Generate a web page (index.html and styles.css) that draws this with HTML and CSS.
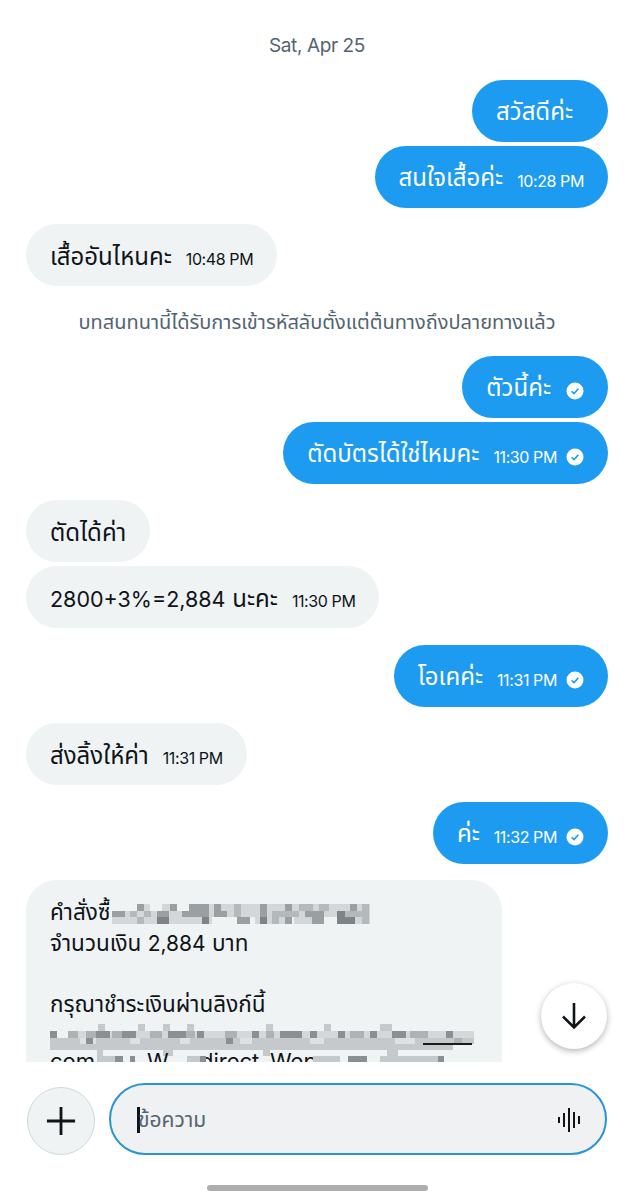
FILE: index.html
```html
<!DOCTYPE html>
<html lang="th">
<head>
    <meta charset="UTF-8">
    <meta name="viewport" content="width=device-width, initial-scale=1.0">
    <title>Chat</title>
    <link rel="stylesheet" href="styles.css">
</head>
<body>
    <div class="thread">
        <p class="date">Sat, Apr 25</p>

        <div class="group sent">
            <div class="bubble bubble-slot"><span class="text">สวัสดีค่ะ</span></div>
            <div class="bubble"><span class="text">สนใจเสื้อค่ะ</span><span class="time">10:28 PM</span></div>
        </div>

        <div class="group received">
            <div class="bubble"><span class="text">เสื้ออันไหนคะ</span><span class="time">10:48 PM</span></div>
        </div>

        <p class="notice">บทสนทนานี้ได้รับการเข้ารหัสลับตั้งแต่ต้นทางถึงปลายทางแล้ว</p>

        <div class="group sent">
            <div class="bubble"><span class="text">ตัวนี้ค่ะ</span><svg class="tick" viewBox="0 0 18 18"><circle cx="9" cy="9" r="8.5" fill="#fff"/><path d="M5.6 9.2l2.4 2.4 4.4-4.8" fill="none" stroke="#1d9bf0" stroke-width="1.6"/></svg></div>
            <div class="bubble"><span class="text">ตัดบัตรได้ใช่ไหมคะ</span><span class="time">11:30 PM</span><svg class="tick" viewBox="0 0 18 18"><circle cx="9" cy="9" r="8.5" fill="#fff"/><path d="M5.6 9.2l2.4 2.4 4.4-4.8" fill="none" stroke="#1d9bf0" stroke-width="1.6"/></svg></div>
        </div>

        <div class="group received">
            <div class="bubble"><span class="text">ตัดได้ค่า</span></div>
            <div class="bubble"><span class="text"><span class="digits">2800+3%=2,884</span> นะคะ</span><span class="time">11:30 PM</span></div>
        </div>

        <div class="group sent">
            <div class="bubble"><span class="text">โอเคค่ะ</span><span class="time">11:31 PM</span><svg class="tick" viewBox="0 0 18 18"><circle cx="9" cy="9" r="8.5" fill="#fff"/><path d="M5.6 9.2l2.4 2.4 4.4-4.8" fill="none" stroke="#1d9bf0" stroke-width="1.6"/></svg></div>
        </div>

        <div class="group received">
            <div class="bubble"><span class="text">ส่งลิ้งให้ค่า</span><span class="time">11:31 PM</span></div>
        </div>

        <div class="group sent">
            <div class="bubble"><span class="text">ค่ะ</span><span class="time">11:32 PM</span><svg class="tick" viewBox="0 0 18 18"><circle cx="9" cy="9" r="8.5" fill="#fff"/><path d="M5.6 9.2l2.4 2.4 4.4-4.8" fill="none" stroke="#1d9bf0" stroke-width="1.6"/></svg></div>
        </div>

        <div class="card">
            <!-- order number is pixelated in the screenshot -->
            <div class="line">คำสั่งซื้<svg class="mosaic-order" viewBox="0 0 260 20" shape-rendering="crispEdges">
                    <rect width="258" height="20" fill="#d3d7d9"/>
                    <g fill="#eff3f4"><rect width="25" height="7"/><rect x="38" width="12" height="7"/><rect x="65" width="12" height="7"/><rect x="100" y="13" width="25" height="7"/><rect x="128" y="13" width="15" height="7"/><rect x="175" y="13" width="7" height="7"/><rect x="200" y="13" width="25" height="7"/></g>
                    <g fill="#9a9fa2"><rect x="25" width="7" height="7"/><rect x="58" width="7" height="7"/><rect x="77" width="20" height="7"/><rect x="102" width="7" height="7"/><rect x="148" width="7" height="7"/><rect x="173" width="7" height="7"/><rect x="238" width="7" height="7"/><rect y="7" width="13" height="6"/><rect x="45" y="7" width="12" height="6"/><rect x="70" y="7" width="20" height="6"/><rect x="90" y="7" width="7" height="6"/><rect x="102" y="7" width="13" height="6"/><rect x="148" y="7" width="7" height="6"/><rect x="193" y="7" width="7" height="6"/><rect x="200" y="7" width="12" height="6"/><rect x="125" y="13" width="13" height="7"/><rect x="173" y="13" width="7" height="7"/><rect x="200" y="13" width="12" height="7"/></g>
                    <g fill="#7e8386"><rect x="45" y="13" width="12" height="7"/><rect x="90" y="13" width="7" height="7"/><rect x="148" y="13" width="7" height="7"/><rect x="225" y="13" width="18" height="7"/><rect x="225" y="7" width="8" height="6"/></g>
                    <g fill="#b4b9bb"><rect x="122" width="7" height="7"/><rect x="187" width="14" height="7"/><rect x="207" width="10" height="7"/><rect x="250" width="7" height="7"/><rect x="18" y="7" width="7" height="6"/><rect x="32" y="7" width="7" height="6"/><rect x="122" y="7" width="7" height="6"/><rect x="160" y="7" width="27" height="6"/><rect x="233" y="7" width="24" height="6"/><rect x="25" y="13" width="7" height="7"/><rect x="160" y="13" width="7" height="7"/><rect x="250" y="13" width="7" height="7"/></g>
                </svg></div>
            <div class="line">จำนวนเงิน <span class="digits">2,884</span> บาท</div>
            <div class="line"></div>
            <div class="line">กรุณาชำระเงินผ่านลิงก์นี้</div>
            <!-- payment link is pixelated too, last line is cut by the composer -->
            <svg class="mosaic-link" viewBox="0 0 424 46" shape-rendering="crispEdges">
                <rect x="22" y="11" width="402" height="7" fill="#d5d8da"/>
                <g fill="#c5c9cb"><rect y="18" width="424" height="6"/><rect y="24" width="403" height="6"/><rect x="48" y="4" width="7" height="7"/><rect x="88" y="4" width="7" height="7"/><rect x="113" y="4" width="7" height="7"/><rect x="137" y="4" width="7" height="7"/><rect x="216" y="4" width="7" height="7"/><rect x="274" y="4" width="7" height="7"/><rect x="330" y="4" width="12" height="7"/><rect x="47" y="30" width="6" height="6"/><rect x="113" y="30" width="10" height="6"/><rect x="213" y="30" width="7" height="6"/><rect x="337" y="30" width="11" height="6"/></g>
                <g fill="#dde1e3"><rect x="30" y="18" width="16" height="6"/><rect x="80" y="18" width="10" height="6"/><rect x="130" y="18" width="10" height="6"/><rect x="190" y="18" width="12" height="6"/><rect x="260" y="18" width="14" height="6"/><rect x="345" y="18" width="20" height="6"/></g>
                <g fill="#aeb2b5"><rect x="18" y="11" width="10" height="7"/><rect x="36" y="11" width="10" height="7"/><rect x="62" y="11" width="10" height="7"/><rect x="100" y="11" width="12" height="7"/><rect x="135" y="11" width="10" height="7"/><rect x="175" y="11" width="12" height="7"/><rect x="216" y="11" width="8" height="7"/><rect x="300" y="11" width="14" height="7"/><rect x="360" y="11" width="18" height="7"/><rect x="404" y="18" width="8" height="6"/></g>
                <g fill="#8a8f92"><rect y="11" width="7" height="7"/><rect x="46" y="11" width="14" height="7"/><rect x="72" y="11" width="14" height="7"/><rect x="118" y="11" width="18" height="7"/><rect x="147" y="11" width="7" height="7"/><rect x="202" y="11" width="7" height="7"/><rect x="230" y="11" width="22" height="7"/><rect x="260" y="11" width="7" height="7"/><rect x="288" y="11" width="7" height="7"/><rect x="320" y="11" width="7" height="7"/><rect x="342" y="11" width="14" height="7"/><rect x="396" y="11" width="7" height="7"/><rect x="36" y="18" width="7" height="6"/><rect x="176" y="18" width="7" height="6"/></g>
                <rect x="373" y="23" width="49" height="2" fill="#1a1a1a"/>
                <text class="cut-text" y="48.500">com</text>
                <text class="cut-text" x="97" y="48.500">W</text>
                <text class="cut-text" x="150" y="48.500">direct</text>
                <text class="cut-text" x="220" y="48.500">Wep</text>
                <g fill="#c5c9cb"><rect x="47" y="36" width="26" height="6"/><rect x="137" y="36" width="16" height="6"/><rect x="263" y="36" width="27" height="6"/><rect x="298" y="36" width="19" height="6"/><rect x="330" y="36" width="17" height="6"/><rect x="347" y="36" width="46" height="6"/></g>
                <g fill="#8a8f92"><rect x="65" y="36" width="8" height="6"/><rect x="80" y="36" width="5" height="6"/><rect x="150" y="36" width="6" height="6"/><rect x="298" y="36" width="19" height="6"/><rect x="388" y="36" width="6" height="6"/></g>
            </svg>
        </div>

        <button class="scroll-down">
            <svg viewBox="0 0 32 32"><path d="M16 3v24M5 16.500L16 27.500 27 16.500" fill="none" stroke="#0f1419" stroke-width="2.600"/></svg>
        </button>
    </div>

    <div class="composer">
        <button class="add">
            <svg viewBox="0 0 32 32"><path d="M16 1v30M1 16h30" fill="none" stroke="#0f1419" stroke-width="3"/></svg>
        </button>
        <div class="field">
            <span class="caret"></span>
            <span class="placeholder">ข้อความ</span>
            <svg class="voice" viewBox="0 0 26 26"><path d="M2 10v6M7 6v14M12 1v24M17 5v16M22 9v8" fill="none" stroke="#0f1419" stroke-width="2"/></svg>
        </div>
    </div>

    <div class="home-row"><div class="home-bar"></div></div>
</body>
</html>
```

FILE: styles.css
```css
body {
    margin: 0;
    width: 634px;
    height: 1200px;
    overflow: hidden;
    background-color: #fff;
    font-family: Inter, "Noto Sans", "Noto Sans Thai", "Liberation Sans", sans-serif;
    color: #0f1419;
}

.thread {
    position: relative;
    height: 1062px;
    padding: 0 26px;
    box-sizing: border-box;
    overflow: hidden;
    display: flex;
    flex-direction: column;
}

.date {
    margin: 34px 0 21.500px;
    text-align: center;
    font-size: 19px;
    line-height: 24px;
    letter-spacing: -0.4px;
    color: #536471;
}

.notice {
    margin: 7px 0 22px;
    text-align: center;
    font-size: 20px;
    line-height: 24px;
    color: #536471;
    white-space: nowrap;
}

.group {
    display: flex;
    flex-direction: column;
    gap: 4px;
    margin-bottom: 16.500px;
}

.sent {
    align-items: flex-end;
}

.received {
    align-items: flex-start;
}

.bubble {
    height: 62px;
    padding: 5px 24px 0;
    box-sizing: border-box;
    border-radius: 31px;
    display: flex;
    align-items: center;
    white-space: nowrap;
}

.bubble-slot {
    padding-right: 35px;
}

.sent .bubble {
    background-color: #1d9bf0;
    color: #fff;
}

.received .bubble {
    background-color: #eff3f4;
}

.text {
    font-size: 24px;
}

.digits {
    font-size: 21.500px;
}

.time {
    margin: 3px 0 0 14px;
    font-size: 16px;
    letter-spacing: -0.4px;
}

.tick {
    width: 18px;
    height: 18px;
    margin: 3px 0 0 9px;
}

.text + .tick {
    margin-left: 15px;
}

.card {
    width: 476px;
    height: 220px;
    flex-shrink: 0;
    padding: 17px 24px;
    box-sizing: border-box;
    border-radius: 31px;
    background-color: #eff3f4;
    font-size: 22.500px;
}

.card .digits {
    font-size: 21px;
}

.line {
    height: 30.500px;
    line-height: 30.500px;
    white-space: nowrap;
}

.mosaic-order {
    width: 260px;
    height: 20px;
    margin-left: 2px;
    vertical-align: -4px;
    filter: blur(0.6px);
}

.mosaic-link {
    display: block;
    width: 424px;
    height: 46px;
    margin-top: 1px;
    overflow: visible;
}

.cut-text {
    font-size: 22px;
    fill: #0f1419;
}

.scroll-down {
    position: absolute;
    left: 541px;
    top: 983px;
    width: 66px;
    height: 66px;
    padding: 17px;
    border: none;
    border-radius: 50%;
    background-color: #fff;
    box-shadow: 0 2px 6px rgba(0, 0, 0, 0.3);
}

.composer {
    display: flex;
    align-items: flex-end;
    gap: 14px;
    height: 93px;
    padding: 0 27px;
    box-sizing: border-box;
}

.add {
    width: 68px;
    height: 68px;
    flex-shrink: 0;
    padding: 18px;
    border: 1px solid #cfd9de;
    border-radius: 50%;
    background-color: #eff3f4;
}

.field {
    flex: 1;
    height: 72px;
    padding: 2px 22px 0 26px;
    border: 2px solid #2a94d6;
    border-radius: 36px;
    box-sizing: border-box;
    background-color: #eff1f3;
    display: flex;
    align-items: center;
}

.caret {
    width: 3px;
    height: 26px;
    margin-right: -2px;
    background-color: #0f1419;
}

.placeholder {
    flex: 1;
    font-size: 21px;
    color: #536471;
}

.voice {
    width: 26px;
    height: 26px;
}

.home-row {
    display: flex;
    justify-content: center;
    padding-top: 30px;
}

.home-bar {
    width: 221px;
    height: 6px;
    border-radius: 3px;
    background-color: #adadad;
}
```
